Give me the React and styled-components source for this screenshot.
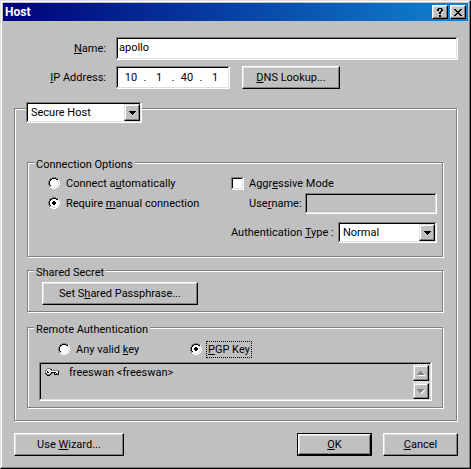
import { useState } from "react";
import styled, { createGlobalStyle, css } from "styled-components";

const GlobalStyle = createGlobalStyle`
  * {
    box-sizing: border-box;
  }

  body {
    margin: 0;
    background: #c0c0c0;
  }

  body, input, select, button {
    font-family: Roboto, "Liberation Sans", Arial, sans-serif;
    font-size: 11px;
    line-height: 13px;
    color: #000;
  }
`;

/* two pixel borders: outer top-left, outer bottom-right, inner top-left, inner bottom-right */
const bevel = (outerTop, outerBottom, innerTop, innerBottom) => css`
  border: 1px solid;
  border-color: ${outerTop} ${outerBottom} ${outerBottom} ${outerTop};
  box-shadow: inset -1px -1px 0 ${innerBottom}, inset 1px 1px 0 ${innerTop};
`;

const raised = bevel("#fff", "#000", "#dfdfdf", "#808080");
const raisedSoft = bevel("#dfdfdf", "#000", "#fff", "#808080");
const sunken = bevel("#808080", "#fff", "#000", "#dfdfdf");
const etched = bevel("#808080", "#fff", "#fff", "#808080");

const Window = styled.main`
  ${raisedSoft}
  width: 100%;
  padding: 2px;
  background: #c0c0c0;
`;

const TitleBar = styled.header`
  display: flex;
  align-items: center;
  gap: 2px;
  height: 18px;
  padding: 0 2px;
  background: linear-gradient(to right, #00007b, #1084d0);
`;

const Title = styled.h1`
  flex: 1;
  margin: 0;
  font-size: 12px;
  font-weight: bold;
  line-height: 16px;
  color: #fff;
`;

const TitleButton = styled.button`
  ${raised}
  display: flex;
  align-items: center;
  justify-content: center;
  width: 16px;
  height: 14px;
  padding: 0;
  background: #c0c0c0;
`;

const Body = styled.form`
  padding: 16px 10px 10px 11px;
`;

const Fields = styled.div`
  display: grid;
  grid-template-columns: 92px 1fr;
  align-items: center;
  gap: 6px 10px;
`;

const FieldLabel = styled.label`
  text-align: right;
`;

const TextBox = styled.input`
  ${sunken}
  width: ${({ $width }) => $width || "100%"};
  height: ${({ $height }) => $height || "23px"};
  padding: 0 3px 2px 2px;
  border-radius: 0;
  outline: none;
  background: #fff;

  &:disabled {
    background: #c0c0c0;
  }
`;

const AddressRow = styled.div`
  display: flex;
  gap: 12px;
`;

const AddressBox = styled.div`
  ${sunken}
  display: flex;
  align-items: center;
  width: 114px;
  height: 23px;
  padding: 0 2px;
  background: #fff;
`;

const Octet = styled.input`
  width: 24px;
  padding: 0;
  border: none;
  outline: none;
  text-align: center;
  background: none;
`;

const Dot = styled.span`
  width: 4px;
  text-align: center;
`;

const Button = styled.button`
  ${raised}
  width: ${({ $width }) => $width};
  height: 23px;
  padding: 0 0 1px;
  background: #c0c0c0;
`;

const DefaultFrame = styled.span`
  display: flex;
  width: 75px;
  height: 23px;
  padding: 1px;
  background: #000;

  ${Button} {
    flex: 1;
    height: 21px;
  }
`;

const Panel = styled.fieldset`
  ${etched}
  min-width: 0;
  margin: 19px 0 11px;
  padding: 0 13px 12px 12px;
`;

const PanelHead = styled.div`
  margin: -7px 0 31px -1px;
`;

const Group = styled.fieldset`
  ${etched}
  min-width: 0;
  margin: ${({ $gap }) => $gap || "0"} 0 0;
  padding: 0 0 0 6px;
`;

const Legend = styled.legend`
  padding: 4px 2px 0;
  background: #c0c0c0;
`;

const SelectWrap = styled.span`
  position: relative;
  display: block;
  width: ${({ $width }) => $width};
  height: 21px;
`;

const Select = styled.select`
  ${sunken}
  appearance: none;
  width: 100%;
  height: 21px;
  padding: 0 20px 0 4px;
  border-radius: 0;
  outline: none;
  background: #fff;
`;

const SelectArrow = styled.span`
  ${raisedSoft}
  position: absolute;
  top: 2px;
  right: 2px;
  display: flex;
  align-items: center;
  justify-content: center;
  width: 16px;
  height: 17px;
  background: #c0c0c0;
  pointer-events: none;
`;

const ConnectionGrid = styled.div`
  display: grid;
  grid-template-columns: 1fr 206px;
  padding: 5px 6px 14px 14px;
`;

const OptionColumn = styled.div`
  display: flex;
  flex-direction: column;
  gap: 6px;
`;

const SettingColumn = styled.div`
  display: flex;
  flex-direction: column;
`;

const SettingRow = styled.div`
  display: flex;
  align-items: center;
  justify-content: space-between;
  margin-top: ${({ $top }) => $top};
  padding-left: ${({ $indent }) => $indent || "0"};
`;

const Option = styled.label`
  display: flex;
  align-items: center;
  gap: 5px;
  height: ${({ $height }) => $height || "14px"};
  width: ${({ $width }) => $width || "auto"};
`;

const Mark = styled.span`
  display: grid;
  width: 13px;
  height: 12px;

  > * {
    grid-area: 1 / 1;
  }
`;

const RadioInput = styled.input`
  appearance: none;
  width: 12px;
  height: 12px;
  margin: 0;
  outline: none;
`;

const CheckInput = styled.input`
  ${sunken}
  appearance: none;
  width: 13px;
  height: 13px;
  margin: 0;
  outline: none;
  background: #fff;
`;

const OptionText = styled.span`
  ${({ $focused }) => $focused && "margin: 0 -2px; padding: 1px; border: 1px dotted #000;"}
`;

const SecretRow = styled.div`
  padding: 3px 0 7px 8px;
`;

const AuthOptions = styled.div`
  display: flex;
  padding: 5px 0 5px 24px;
`;

const KeyList = styled.div`
  ${sunken}
  display: flex;
  height: 39px;
  margin: 0 11px 7px 5px;
  padding: 1px 2px 1px 5px;
`;

const KeyItem = styled.div`
  display: flex;
  flex: 1;
  align-items: center;
  gap: 10px;
  height: 16px;
`;

const ScrollBar = styled.div`
  display: flex;
  flex-direction: column;
  justify-content: space-between;
  width: 16px;
  padding-top: 1px;
  background: repeating-conic-gradient(#fff 0% 25%, #c0c0c0 0% 50%) 0 0 / 2px 2px;
`;

const ScrollButton = styled.button`
  ${raisedSoft}
  display: flex;
  align-items: center;
  justify-content: center;
  width: 16px;
  height: 16px;
  padding: 0;
  background: #c0c0c0;
`;

const Footer = styled.footer`
  display: flex;
  gap: 11px;

  > :first-child {
    margin-right: auto;
  }
`;

const COLORS = {
  k: "#000",
  g: "#808080",
  l: "#dfdfdf",
  W: "#fff",
  w: "#fff",
};

const RADIO = [
  "....gggg....",
  "..ggkkkkgg..",
  ".gkkwwwwkkW.",
  ".gkwwwwwwlW.",
  "gkwwwwwwwwlW",
  "gkwwwwwwwwlW",
  "gkwwwwwwwwlW",
  "gkwwwwwwwwlW",
  ".gkwwwwwwlW.",
  ".gllwwwwllW.",
  "..WWllllWW..",
  "....WWWW....",
];

const RADIO_ON = RADIO.map((row, y) => {
  if (y === 4 || y === 7) return row.slice(0, 5) + "kk" + row.slice(7);
  if (y === 5 || y === 6) return row.slice(0, 4) + "kkkk" + row.slice(8);
  return row;
});

const HELP = [
  ".kkkk.",
  "kk..kk",
  "kk..kk",
  "...kk.",
  "..kk..",
  "..kk..",
  "......",
  "..kk..",
  "..kk..",
];

const CLOSE = [
  "kk....kk",
  ".kk..kk.",
  "..kkkk..",
  "...kk...",
  "..kkkk..",
  ".kk..kk.",
  "kk....kk",
];

const ARROW = ["kkkkkkk", ".kkkkk.", "..kkk..", "...k..."];

const SCROLL_UP = [
  "...g....",
  "..ggg...",
  ".ggggg..",
  "ggggggg.",
  ".wwwwwww",
];

const SCROLL_DOWN = [
  "ggggggg.",
  ".gggggww",
  "..gggww.",
  "...gww..",
  "....w...",
];

const KEY = [
  "..gggg........",
  ".glwlgk.......",
  "ggwllwgggggggg",
  "gwkllwlwwwwwwk",
  "gwkkwlkkkkkwlk",
  "kglwlgk..kwkwk",
  ".kgggk...kkkkk",
  "..kkk.........",
];

function Pixels({ rows }) {
  return (
    <svg width={rows[0].length} height={rows.length} shapeRendering="crispEdges" aria-hidden="true">
      {rows.map((row, y) =>
        [...row].map((cell, x) =>
          cell === "." ? null : (
            <rect key={`${x}-${y}`} x={x} y={y} width="1" height="1" fill={COLORS[cell]} />
          )
        )
      )}
    </svg>
  );
}

function Radio({ name, checked, onChange, focused, width, height, children }) {
  return (
    <Option $width={width} $height={height}>
      <Mark>
        <RadioInput type="radio" name={name} checked={checked} onChange={onChange} />
        <Pixels rows={checked ? RADIO_ON : RADIO} />
      </Mark>
      <OptionText $focused={focused}>{children}</OptionText>
    </Option>
  );
}

function DropDown({ id, label, width, options }) {
  return (
    <SelectWrap $width={width}>
      <Select id={id} aria-label={label}>
        {options.map((option) => (
          <option key={option}>{option}</option>
        ))}
      </Select>
      <SelectArrow>
        <Pixels rows={ARROW} />
      </SelectArrow>
    </SelectWrap>
  );
}

export default function App() {
  const [address, setAddress] = useState(["10", "1", "40", "1"]);
  const [connect, setConnect] = useState("manual");
  const [auth, setAuth] = useState("pgp");
  const [aggressive, setAggressive] = useState(false);

  const changeOctet = (index, value) => {
    setAddress(address.map((octet, i) => (i === index ? value : octet)));
  };

  return (
    <>
      <GlobalStyle />
      <Window>
        <TitleBar>
          <Title>Host</Title>
          <TitleButton type="button" aria-label="Help">
            <Pixels rows={HELP} />
          </TitleButton>
          <TitleButton type="button" aria-label="Close">
            <Pixels rows={CLOSE} />
          </TitleButton>
        </TitleBar>
        <Body onSubmit={(event) => event.preventDefault()}>
          <Fields>
            <FieldLabel htmlFor="name"><u>N</u>ame:</FieldLabel>
            <TextBox id="name" defaultValue="apollo" />
            <FieldLabel htmlFor="octet-0"><u>I</u>P Address:</FieldLabel>
            <AddressRow>
              <AddressBox>
                {address.map((octet, index) => [
                  index > 0 && <Dot key={`dot-${index}`}>.</Dot>,
                  <Octet
                    key={index}
                    id={`octet-${index}`}
                    maxLength={3}
                    value={octet}
                    onChange={(event) => changeOctet(index, event.target.value)}
                  />,
                ])}
              </AddressBox>
              <Button type="button" $width="98px"><u>D</u>NS Lookup...</Button>
            </AddressRow>
          </Fields>

          <Panel>
            <PanelHead>
              <DropDown label="Host type" width="116px" options={["Secure Host", "Insecure Host"]} />
            </PanelHead>

            <Group>
              <Legend>Connection Options</Legend>
              <ConnectionGrid>
                <OptionColumn>
                  <Radio name="connect" checked={connect === "auto"} onChange={() => setConnect("auto")}>
                    Connect a<u>u</u>tomatically
                  </Radio>
                  <Radio name="connect" checked={connect === "manual"} onChange={() => setConnect("manual")}>
                    Require <u>m</u>anual connection
                  </Radio>
                </OptionColumn>
                <SettingColumn>
                  <Option>
                    <CheckInput
                      type="checkbox"
                      checked={aggressive}
                      onChange={(event) => setAggressive(event.target.checked)}
                    />
                    <OptionText>Aggr<u>e</u>ssive Mode</OptionText>
                  </Option>
                  <SettingRow $top="3px" $indent="18px">
                    <label htmlFor="username">Use<u>r</u>name:</label>
                    <TextBox id="username" $width="132px" $height="21px" disabled={!aggressive} />
                  </SettingRow>
                  <SettingRow $top="8px">
                    <label htmlFor="auth-type">Authentication <u>T</u>ype :</label>
                    <DropDown id="auth-type" width="99px" options={["Normal", "PKCS-12"]} />
                  </SettingRow>
                </SettingColumn>
              </ConnectionGrid>
            </Group>

            <Group $gap="4px">
              <Legend>Shared Secret</Legend>
              <SecretRow>
                <Button type="button" $width="156px">Set S<u>h</u>ared Passphrase...</Button>
              </SecretRow>
            </Group>

            <Group $gap="6px">
              <Legend>Remote Authentication</Legend>
              <AuthOptions>
                <Radio name="auth" width="132px" height="16px" checked={auth === "any"} onChange={() => setAuth("any")}>
                  Any valid <u>k</u>ey
                </Radio>
                <Radio name="auth" height="16px" focused checked={auth === "pgp"} onChange={() => setAuth("pgp")}>
                  <u>P</u>GP Key
                </Radio>
              </AuthOptions>
              <KeyList>
                <KeyItem>
                  <Pixels rows={KEY} />
                  freeswan &lt;freeswan&gt;
                </KeyItem>
                <ScrollBar>
                  <ScrollButton type="button" aria-label="Scroll up" disabled>
                    <Pixels rows={SCROLL_UP} />
                  </ScrollButton>
                  <ScrollButton type="button" aria-label="Scroll down" disabled>
                    <Pixels rows={SCROLL_DOWN} />
                  </ScrollButton>
                </ScrollBar>
              </KeyList>
            </Group>
          </Panel>

          <Footer>
            <Button type="button" $width="110px">Use <u>W</u>izard...</Button>
            <DefaultFrame>
              <Button type="submit"><u>O</u>K</Button>
            </DefaultFrame>
            <Button type="button" $width="75px"><u>C</u>ancel</Button>
          </Footer>
        </Body>
      </Window>
    </>
  );
}
